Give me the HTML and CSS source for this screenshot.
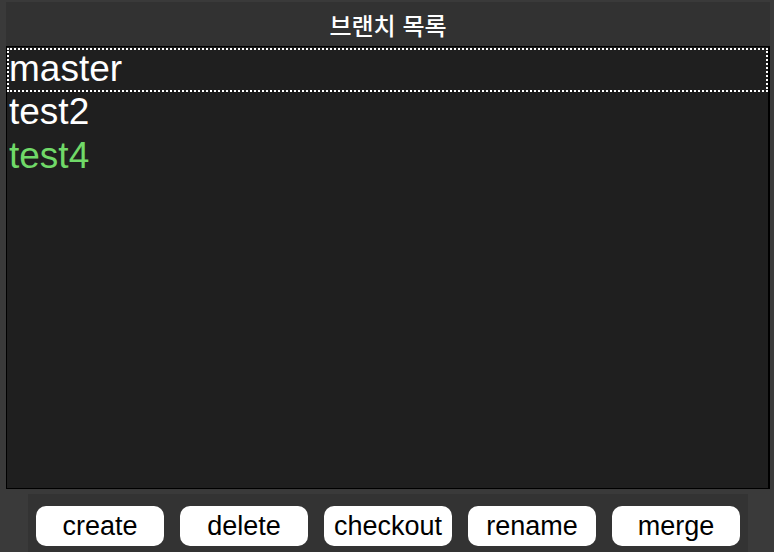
FILE: index.html
```html
<!DOCTYPE html>
<html lang="ko">
<head>
<meta charset="utf-8">
<title>브랜치 목록</title>
<link rel="stylesheet" href="styles.css">
</head>
<body>
<div class="app">
  <div class="title">브랜치 목록</div>
  <ul class="list">
    <li class="item selected">master</li>
    <li class="item">test2</li>
    <li class="item current">test4</li>
  </ul>
  <div class="bar">
    <button class="btn">create</button>
    <button class="btn">delete</button>
    <button class="btn">checkout</button>
    <button class="btn">rename</button>
    <button class="btn">merge</button>
  </div>
</div>
</body>
</html>
```

FILE: styles.css
```css
html, body {
  margin: 0;
  padding: 0;
  background: #3a3a3a;
  height: 100%;
}
.app {
  display: flex;
  flex-direction: column;
  height: 552px;
  padding: 2px 4px 0 6px;
  box-sizing: border-box;
}
.title {
  height: 44px;
  flex: none;
  background: #323232;
  color: #ffffff;
  font-family: "Noto Sans CJK KR", "Noto Sans", sans-serif;
  font-size: 24px;
  font-weight: 500;
  display: flex;
  align-items: center;
  justify-content: center;
}
.list {
  list-style: none;
  margin: 0;
  padding: 1px 0 0 0;
  height: 443px;
  flex: none;
  box-sizing: border-box;
  background: #1f1f1f;
  border: 1px solid #000;
  border-right-width: 2px;
  font-family: "Liberation Sans", Arial, sans-serif;
  font-size: 37px;
}
.item {
  height: 44px;
  line-height: 40px;
  color: #ffffff;
  padding-left: 2px;
  box-sizing: border-box;
}
.item.selected {
  border: 2px dotted #ffffff;
  line-height: 38px;
  padding-left: 0;
}
.item.current {
  color: #70d968;
}
.bar {
  margin: 5px 22px 0 22px;
  flex: 1;
  background: #333333;
  display: flex;
  gap: 16px;
  padding: 12px 8px 0 8px;
  align-items: flex-start;
}
.btn {
  width: 128px;
  height: 40px;
  border: none;
  border-radius: 10px;
  background: #ffffff;
  color: #000000;
  font-family: "Liberation Sans", Arial, sans-serif;
  font-size: 27px;
  padding: 0;
}
```
